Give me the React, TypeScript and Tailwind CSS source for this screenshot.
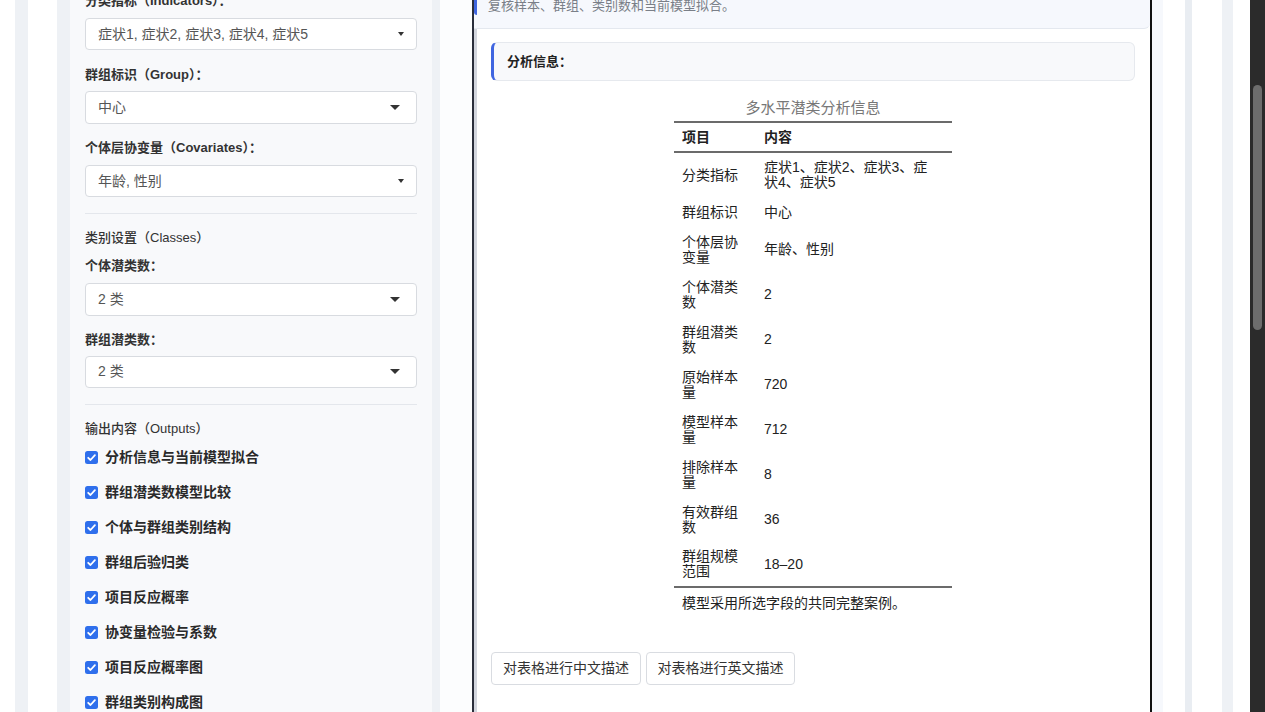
import React from "react";

// [label, value, wraps to two lines]
const rows: [string, string, boolean][] = [
  ["分类指标", "症状1、症状2、症状3、症状4、症状5", true],
  ["群组标识", "中心", false],
  ["个体层协变量", "年龄、性别", true],
  ["个体潜类数", "2", true],
  ["群组潜类数", "2", true],
  ["原始样本量", "720", true],
  ["模型样本量", "712", true],
  ["排除样本量", "8", true],
  ["有效群组数", "36", true],
  ["群组规模范围", "18–20", true],
];

const outputs = [
  "分析信息与当前模型拟合",
  "群组潜类数模型比较",
  "个体与群组类别结构",
  "群组后验归类",
  "项目反应概率",
  "协变量检验与系数",
  "项目反应概率图",
  "群组类别构成图",
];

function Caret({ big }: { big?: boolean }) {
  return big ? (
    <span className="h-0 w-0 border-x-[5px] border-t-[5px] border-x-transparent border-t-[#333]" />
  ) : (
    <span className="h-0 w-0 border-x-[3.5px] border-t-[4px] border-x-transparent border-t-[#333]" />
  );
}

function Select({ value, big, className }: { value: string; big?: boolean; className: string }) {
  return (
    <div
      className={`${className} flex h-[34px] w-full items-center justify-between rounded-[4px] border border-[#d8dbe0] bg-white pl-[12px] text-[14px] text-[#555] ${
        big ? "pr-[16px]" : "pr-[12px]"
      }`}
    >
      <span>{value}</span>
      <Caret big={big} />
    </div>
  );
}

function Label({ text, className }: { text: string; className: string }) {
  return <div className={`${className} text-[13px] font-bold leading-[18px] text-[#333]`}>{text}</div>;
}

function CheckIcon() {
  return (
    <svg width="13" height="13" viewBox="0 0 13 13" className="shrink-0">
      <rect x="0" y="0" width="13" height="13" rx="2.5" fill="#2f6fec" />
      <path d="M3.2 6.8 L5.5 9 L9.9 4.2" fill="none" stroke="#fff" strokeWidth="1.8" strokeLinecap="round" strokeLinejoin="round" />
    </svg>
  );
}

function Sidebar() {
  return (
    <aside className="flex w-[362px] flex-col bg-[#f8f9fb] px-[15px]">
      <Label className="-mt-[8px]" text="分类指标（Indicators）：" />
      <Select className="mt-[8px]" value="症状1, 症状2, 症状3, 症状4, 症状5" />
      <Label className="mt-[16px]" text="群组标识（Group）：" />
      <Select className="mt-[7px]" value="中心" big />
      <Label className="mt-[15px]" text="个体层协变量（Covariates）：" />
      <Select className="mt-[8px]" value="年龄, 性别" />
      <div className="mt-[16px] h-px bg-[#e4e7ec]" />
      <div className="mt-[15px] text-[13px] font-medium leading-[18px] text-[#333]">类别设置（Classes）</div>
      <Label className="mt-[10px]" text="个体潜类数：" />
      <Select className="mt-[8px]" value="2 类" big />
      <Label className="mt-[15px]" text="群组潜类数：" />
      <Select className="mt-[7px]" value="2 类" big />
      <div className="mt-[16px] h-px bg-[#e4e7ec]" />
      <div className="mt-[15px] text-[13px] font-medium leading-[18px] text-[#333]">输出内容（Outputs）</div>
      <div className="mt-[9px] flex flex-col gap-[15px]">
        {outputs.map((o) => (
          <div key={o} className="flex h-[20px] items-center gap-[7px]">
            <CheckIcon />
            <span className="text-[14px] font-semibold text-[#2a2a2a]">{o}</span>
          </div>
        ))}
      </div>
    </aside>
  );
}

function InfoTable() {
  return (
    <div className="mx-auto mt-[17px] w-[278px]">
      <div className="text-center text-[15px] leading-[20px] text-[#777]">多水平潜类分析信息</div>
      <table className="mt-[3px] w-[278px] table-fixed border-collapse text-[14px] text-[#222]">
        <colgroup>
          <col className="w-[82px]" />
          <col className="w-[196px]" />
        </colgroup>
        <thead>
          <tr className="border-y-2 border-[#6b6b6b]">
            <th className="h-[30px] px-[8px] py-0 text-left font-bold leading-[15px]">项目</th>
            <th className="h-[30px] px-[8px] py-0 text-left font-bold leading-[15px]">内容</th>
          </tr>
        </thead>
        <tbody>
          {rows.map(([k, v, two], i) => (
            <tr key={k} className={i === rows.length - 1 ? "border-b-2 border-[#6b6b6b]" : ""}>
              <td className={`${two ? "h-[45px]" : "h-[30px]"} py-0 pl-[8px] pr-[10px] align-middle leading-[15px]`}>{k}</td>
              <td className={`${two ? "h-[45px]" : "h-[30px]"} py-0 pl-[8px] pr-[18px] align-middle leading-[15px]`}>{v}</td>
            </tr>
          ))}
        </tbody>
      </table>
      <div className="pl-[8px] pt-[5px] text-[14px] leading-[20px] text-[#222]">模型采用所选字段的共同完整案例。</div>
    </div>
  );
}

function MainPanel() {
  return (
    <section className="flex w-[680px] flex-col border-x-2 border-l-[#2a2e3b] border-r-[#111]">
      <div className="h-[29px] rounded-br-[6px] border-b border-[#e4e8ef] bg-[#f6f8fd]">
        <div className="flex h-[15px] items-end rounded-bl-[3px] border-l-[3px] border-[#3f66e0] pl-[11px]">
          <span className="text-[13px] leading-[18px] text-[#7a7f88]">复核样本、群组、类别数和当前模型拟合。</span>
        </div>
      </div>
      <div className="flex flex-1 flex-col border-l-[3px] border-[#d3d6de] bg-white pl-[14px] pr-[15px]">
        <div className="mt-[13px] flex h-[39px] items-center rounded-[6px] border border-l-[3px] border-[#e6e9ee] border-l-[#4066e0] bg-[#f8f9fb] pl-[13px]">
          <span className="text-[13px] font-bold text-[#222]">分析信息：</span>
        </div>
        <InfoTable />
        <div className="mt-[39px] flex gap-[5px]">
          <button className="h-[33px] w-[150px] rounded-[4px] border border-[#d9dce1] bg-white text-[14px] text-[#333]">
            对表格进行中文描述
          </button>
          <button className="h-[33px] w-[149px] rounded-[4px] border border-[#d9dce1] bg-white text-[14px] text-[#333]">
            对表格进行英文描述
          </button>
        </div>
      </div>
    </section>
  );
}

export default function App() {
  return (
    <div className="flex h-[712px] w-[1265px] overflow-hidden bg-white font-['Liberation_Sans','Noto_Sans_CJK_SC',sans-serif]">
      <div className="flex h-full w-[1250px]">
        <div className="w-[15px]" />
        <div className="w-[13px] bg-[#eef1f5]" />
        <div className="w-[29px]" />
        <div className="w-[13px] bg-[#eef1f5]" />
        <Sidebar />
        <div className="w-[8px] bg-[#eef1f5]" />
        <div className="w-[32px] bg-[#fcfdfe]" />
        <MainPanel />
        <div className="w-[11px] bg-[#f6f8fc]" />
        <div className="w-[22px]" />
        <div className="w-[7px] bg-[#e9edf2]" />
        <div className="w-[30px]" />
        <div className="w-[11px] bg-[#eef1f5]" />
        <div className="w-[17px]" />
      </div>
      <div className="relative w-[15px] bg-[#2b2b2b]">
        <div className="absolute left-[3px] top-[85px] h-[245px] w-[9px] rounded-full bg-[#6d6d6d]" />
      </div>
    </div>
  );
}
